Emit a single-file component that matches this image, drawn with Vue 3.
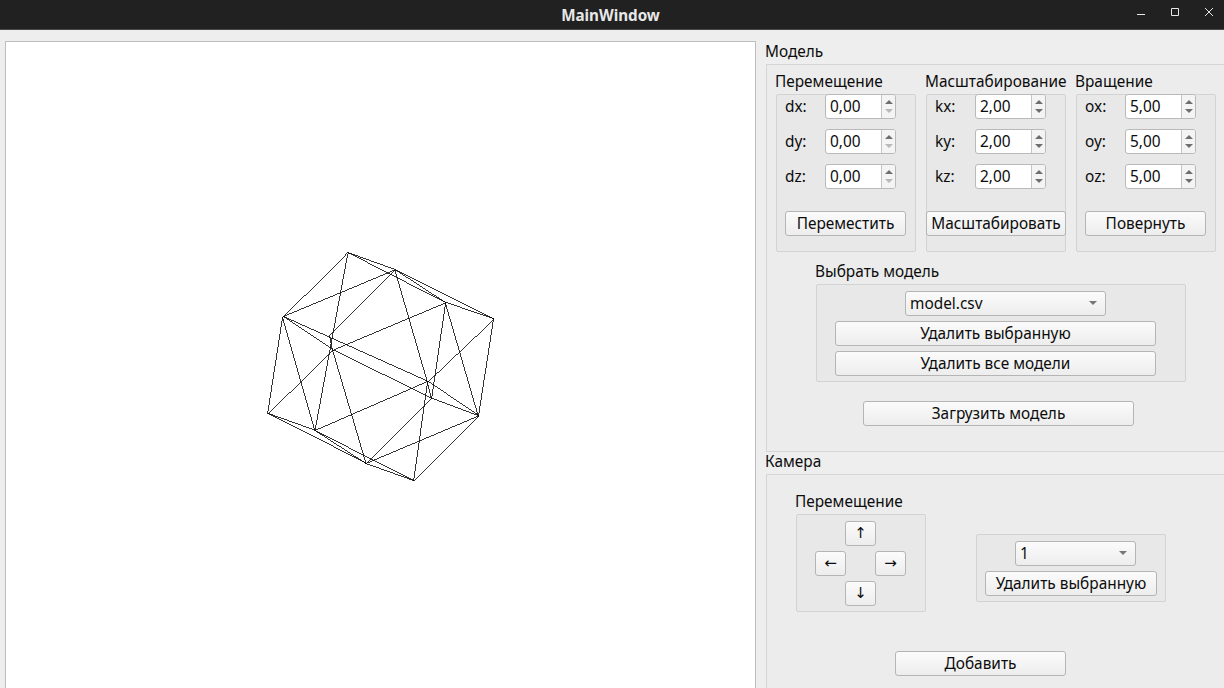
<template>
  <div class="window">
    <header class="titlebar">
      <span></span>
      <span class="title">MainWindow</span>
      <div class="controls">
        <svg width="12" height="12" viewBox="0 0 12 12"><path d="M2 8.5h8" stroke="#e6e6e6" fill="none" /></svg>
        <svg width="12" height="12" viewBox="0 0 12 12"><path d="M2.5 2.5h7v7h-7z" stroke="#e6e6e6" fill="none" /></svg>
        <svg width="12" height="12" viewBox="0 0 12 12"><path d="M2 2l8 8M10 2l-8 8" stroke="#e6e6e6" fill="none" /></svg>
      </div>
    </header>

    <main class="main">
      <div class="canvas">
        <svg class="scene" viewBox="6 42 749 646" width="749" height="646" shape-rendering="crispEdges">
          <line
            v-for="e in edges"
            :key="e"
            :x1="pts[e[0]][0]"
            :y1="pts[e[0]][1]"
            :x2="pts[e[1]][0]"
            :y2="pts[e[1]][1]"
            stroke="#000"
            stroke-width="0.8"
          />
        </svg>
      </div>

      <aside class="side">
        <div class="section-title">Модель</div>
        <section class="panel model">
          <div class="columns">
            <div v-for="g in groups" :key="g.title" class="col">
              <div class="sub-title">{{ g.title }}</div>
              <div class="box tools">
                <div v-for="r in g.rows" :key="r" class="spin-row">
                  <label>{{ r }}:</label>
                  <div class="spin">
                    <span class="val">{{ g.value }}</span>
                    <div class="arrows">
                      <i class="up"></i>
                      <i class="down" :class="{ off: g.value === '0,00' }"></i>
                    </div>
                  </div>
                </div>
                <button class="btn action" :class="{ wide: g.wide }">{{ g.action }}</button>
              </div>
            </div>
          </div>

          <div class="sub-title pick-title">Выбрать модель</div>
          <div class="box pick">
            <div class="combo model-combo"><span>model.csv</span><i></i></div>
            <button class="btn pick-btn">Удалить выбранную</button>
            <button class="btn pick-btn">Удалить все модели</button>
          </div>
          <button class="btn load">Загрузить модель</button>
        </section>

        <div class="section-title cam-title">Камера</div>
        <section class="panel camera">
          <div class="cam-row">
            <div class="cam-move">
              <div class="sub-title">Перемещение</div>
              <div class="box pad">
                <button class="btn arrow a-up">↑</button>
                <button class="btn arrow a-left">←</button>
                <button class="btn arrow a-right">→</button>
                <button class="btn arrow a-down">↓</button>
              </div>
            </div>
            <div class="box cam-list">
              <div class="combo cam-combo"><span>1</span><i></i></div>
              <button class="btn cam-del">Удалить выбранную</button>
            </div>
          </div>
          <button class="btn add">Добавить</button>
        </section>
      </aside>
    </main>
  </div>
</template>

<script setup>
const pts = {
  A: [348, 252.5], B: [395, 269.5], C: [445.5, 302.5], D: [493.5, 319],
  E: [282.5, 316.5], F: [329.5, 334.5], G: [332.5, 350], H: [427.5, 381.5],
  I: [431.5, 398.5], J: [478.5, 416], K: [267.5, 413.5], L: [315, 430.5],
  M: [366, 463.5], N: [413.5, 480.5]
};

const edges = [
  'AB', 'AC', 'AE', 'AL', 'BC', 'BD', 'BE', 'BF', 'BH', 'CD', 'CG', 'CI', 'CJ',
  'DH', 'DJ', 'EG', 'EH', 'EK', 'EL', 'FG', 'GI', 'GK', 'GM', 'HI', 'HJ', 'HL',
  'HN', 'IJ', 'IM', 'JM', 'JN', 'KL', 'KM', 'LM', 'LN', 'MN'
];

const groups = [
  { title: 'Перемещение', rows: ['dx', 'dy', 'dz'], value: '0,00', action: 'Переместить' },
  { title: 'Масштабирование', rows: ['kx', 'ky', 'kz'], value: '2,00', action: 'Масштабировать', wide: true },
  { title: 'Вращение', rows: ['ox', 'oy', 'oz'], value: '5,00', action: 'Повернуть' }
];
</script>

<style>
html, body { margin: 0; overflow: hidden; background: #eeeeee; }
</style>

<style scoped>
.window {
  width: 1224px; height: 688px; overflow: hidden; background: #eeeeee;
  font-family: "Noto Sans", "Open Sans", sans-serif; font-size: 15.4px; color: #0c0c0c;
}
.titlebar {
  height: 30px; display: grid; grid-template-columns: 1fr auto 1fr; align-items: center;
  background: #212121; border-bottom: 1px solid #4a4a4a; box-sizing: border-box;
}
.title { color: #e8e8e8; font-weight: 700; font-size: 15.2px; margin-left: -3px; }
.controls { display: flex; justify-content: flex-end; gap: 22px; padding-right: 9px; margin-top: -5px; }
.controls svg { display: block; }

.main { display: flex; height: 658px; padding-top: 11px; box-sizing: border-box; }
.canvas {
  width: 751px; height: 660px; margin-left: 5px; flex: none; box-sizing: border-box;
  background: #fff; border: 1px solid #bdbdbd; border-bottom: 0;
}
.scene { display: block; }

.side { margin-left: 9px; width: 470px; flex: none; }
.section-title { height: 20px; line-height: 22px; margin-bottom: 3px; }
.cam-title { margin-top: -1px; }
.panel {
  margin-left: 1px; box-sizing: border-box; border: 1px solid #d6d6d6; border-right: 0;
  background: #ececec;
}
.model { height: 388px; padding: 6px 0 0 9px; }
.camera { height: 230px; border-bottom: 0; }

.columns { display: flex; gap: 10px; }
.col { width: 140px; }
.sub-title { height: 20px; line-height: 22px; margin: 0 0 3px -1px; white-space: nowrap; }
.box { box-sizing: border-box; border: 1px solid #d3d3d3; border-radius: 2px; background: #e8e8e8; }
.tools { height: 158px; padding: 0 0 0 8px; display: flex; flex-direction: column; gap: 10px; }

.spin-row { display: flex; align-items: center; height: 25px; }
.spin-row:first-child { margin-top: -1px; }
.spin-row label { width: 40px; line-height: 22px; }
.spin {
  width: 71px; height: 25px; box-sizing: border-box; display: flex; background: #fff;
  border: 1px solid #b9b9b9; border-radius: 3px;
}
.val { flex: 1; line-height: 23px; padding-left: 4px; font-size: 15.4px; }
.arrows {
  width: 14px; box-sizing: border-box; border-left: 1px solid #c4c4c4; background: #f4f4f4;
  display: flex; flex-direction: column; align-items: center; justify-content: center; gap: 5px;
  border-radius: 0 2px 2px 0;
}
.arrows i { display: block; width: 0; height: 0; border: 4px solid transparent; }
.arrows .up { border-top: 0; border-bottom: 4px solid #6e6e6e; }
.arrows .down { border-bottom: 0; border-top: 4px solid #6e6e6e; }
.arrows .down.off { border-top-color: #b8b8b8; }

.btn {
  display: block; height: 25px; padding: 0 0 1px; box-sizing: border-box; font: inherit; color: inherit;
  border: 1px solid #b5b5b5; border-radius: 3px; background: linear-gradient(#fbfbfb, #ededed);
  white-space: nowrap;
}
.action { width: 121px; margin-top: 12px; }
.action.wide { width: 140px; margin-left: -9px; }

.pick-title { margin: 9px 0 3px 39px; }
.pick {
  width: 370px; height: 98px; margin-left: 40px; padding: 6px 0 0 18px;
  display: flex; flex-direction: column; gap: 5px;
}
.combo {
  height: 25px; box-sizing: border-box; display: flex; align-items: center; justify-content: space-between;
  padding: 0 8px 1px 4px; border: 1px solid #b5b5b5; border-radius: 3px;
  background: linear-gradient(#fbfbfb, #ededed);
}
.combo i { width: 0; height: 0; border: 4px solid transparent; border-bottom: 0; border-top: 4px solid #777; }
.model-combo { width: 201px; margin-left: 70px; }
.pick-btn { width: 321px; }
.load { width: 271px; margin: 19px 0 0 87px; }

.cam-row { display: flex; padding: 16px 0 0 29px; }
.cam-move { width: 130px; }
.pad {
  width: 130px; height: 98px; padding: 6px 0 0 18px;
  display: grid; grid-template-columns: repeat(3, 30px); grid-template-rows: repeat(3, 25px); gap: 5px 0;
}
.arrow { width: 31px; font-family: "DejaVu Sans", sans-serif; font-size: 15px; }
.a-up { grid-area: 1 / 2; }
.a-left { grid-area: 2 / 1; }
.a-right { grid-area: 2 / 3; }
.a-down { grid-area: 3 / 2; }
.cam-list {
  width: 190px; height: 68px; margin: 43px 0 0 50px; padding: 6px 0 0 8px;
  display: flex; flex-direction: column; gap: 5px;
}
.cam-combo { width: 121px; margin-left: 30px; }
.cam-del { width: 172px; }
.add { width: 171px; margin: 39px 0 0 128px; }
</style>
